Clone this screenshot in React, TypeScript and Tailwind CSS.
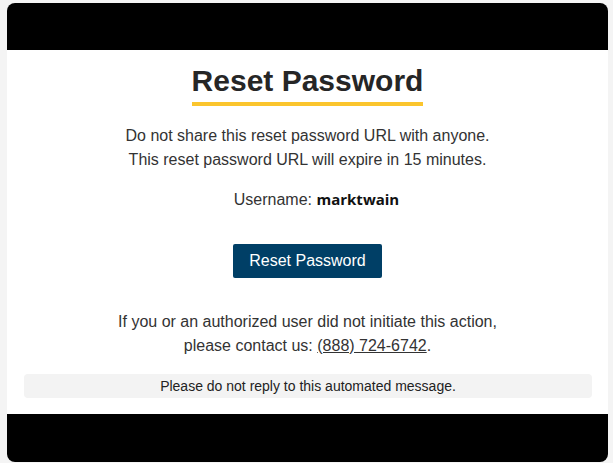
const bodyFont = { fontFamily: '"Liberation Sans", Arial, sans-serif' };

export default function App() {
  return (
    <div className="h-[463px] w-[613px] bg-[#f4f4f4] pl-[7px] pr-[5px] pt-[3px] pb-px" style={bodyFont}>
      <div className="flex h-full flex-col overflow-hidden rounded-[8px] bg-white text-[#333]">
        <div className="h-[47px] shrink-0 bg-black" />

        <div className="flex flex-1 flex-col items-center">
          <h1 className="mt-[14px] inline-block border-b-4 border-[#fbc52d] pb-[4px] text-[30px] font-bold leading-[34px] text-[#262626]">
            Reset Password
          </h1>

          <div className="mt-[18px] text-center text-[16px] leading-[24px]">
            <p>Do not share this reset password URL with anyone.</p>
            <p>This reset password URL will expire in 15 minutes.</p>
          </div>

          <p className="mt-[15px] pl-[18px] text-[16px] leading-[24px]">
            Username:{" "}
            <span className="text-[15px] font-bold text-[#111]" style={{ fontFamily: '"Open Sans", sans-serif' }}>
              marktwain
            </span>
          </p>

          <button className="mt-[32px] h-[34px] rounded-[2px] bg-[#003f66] px-[16px] text-[16px] text-white">
            Reset Password
          </button>

          <div className="mt-[32px] text-center text-[16px] leading-[24px]">
            <p>If you or an authorized user did not initiate this action,</p>
            <p>
              please contact us: <a className="underline">(888) 724-6742</a>.
            </p>
          </div>

          <div className="mt-[16px] ml-[17px] mr-[16px] flex h-[24px] items-center justify-center self-stretch rounded-[4px] bg-[#f3f3f3] text-[14px] text-[#222]">
            Please do not reply to this automated message.
          </div>
        </div>

        <div className="h-[48px] shrink-0 bg-black" />
      </div>
    </div>
  );
}
